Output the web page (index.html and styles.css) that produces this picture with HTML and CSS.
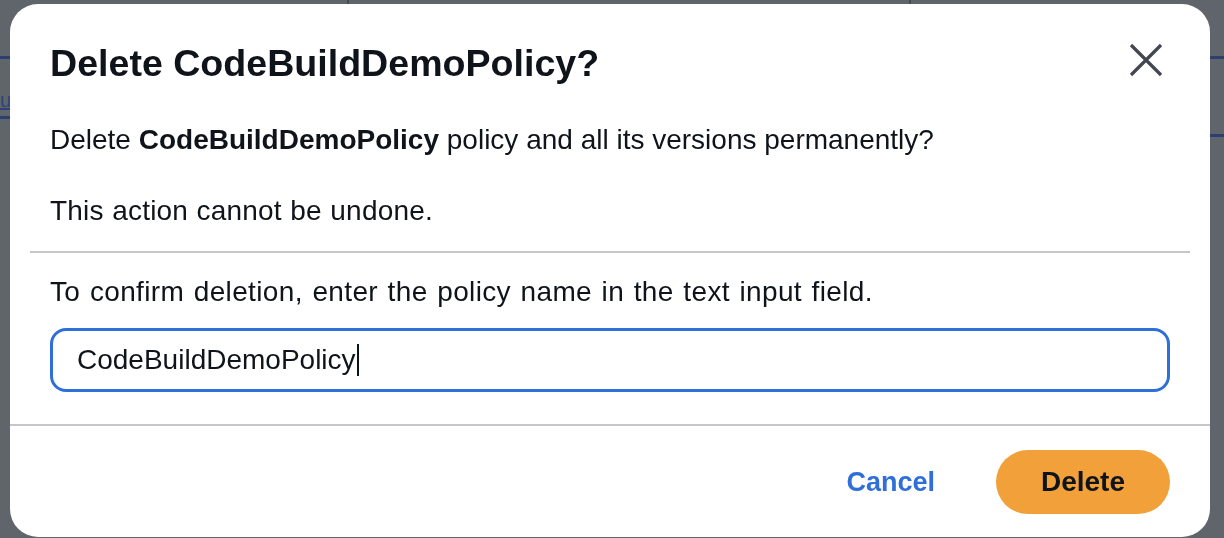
FILE: index.html
```html
<!DOCTYPE html>
<html lang="en">
<head>
<meta charset="utf-8">
<title>Delete policy</title>
<link rel="stylesheet" href="styles.css">
</head>
<body>
<div class="page">
  <div class="page-top">
    <span class="top-col top-col-a"></span>
    <span class="top-col top-col-b"></span>
    <span class="top-col top-col-c"></span>
  </div>
  <div class="page-body">
    <div class="edge edge-left">
      <div class="bg-rule"></div>
      <a class="bg-link">ui</a>
      <div class="bg-rule bg-rule-low"></div>
    </div>
    <div class="edge edge-right">
      <div class="bg-rule"></div>
      <div class="bg-rule bg-rule-far"></div>
    </div>
  </div>
</div>

<div class="overlay">
  <div class="modal" role="dialog" aria-labelledby="modal-title">
    <div class="modal-header">
      <h2 class="modal-title" id="modal-title">Delete CodeBuildDemoPolicy?</h2>
      <button class="close-btn" aria-label="Close modal">
        <svg width="34" height="34" viewBox="0 0 34 34" aria-hidden="true">
          <path d="M2 2 L32 32 M32 2 L2 32" fill="none" stroke="#424650" stroke-width="3.2" stroke-linecap="butt"/>
        </svg>
      </button>
    </div>
    <div class="modal-body">
      <p class="text first">Delete <b>CodeBuildDemoPolicy</b> policy and all its versions permanently?</p>
      <p class="text second">This action cannot be undone.</p>
      <div class="divider"></div>
      <p class="text label">To confirm deletion, enter the policy name in the text input field.</p>
      <div class="input"><span class="input-value">CodeBuildDemoPolicy</span><span class="caret"></span></div>
    </div>
    <div class="modal-footer">
      <a class="cancel" href="#">Cancel</a>
      <button class="delete-btn">Delete</button>
    </div>
  </div>
</div>
</body>
</html>
```

FILE: styles.css
```css
* { box-sizing: border-box; }

html, body {
  margin: 0;
  padding: 0;
}

body {
  width: 1224px;
  height: 538px;
  overflow: hidden;
  background: #60646b;
  font-family: "Liberation Sans", Arial, sans-serif;
  color: #0f141a;
}

/* dimmed page behind the modal */
.page {
  height: 538px;
  display: flex;
  flex-direction: column;
}

.page-top {
  display: flex;
  height: 6px;
}

.top-col {
  height: 6px;
}

.top-col-a { width: 349px; border-right: 2px solid #474b52; }
.top-col-b { width: 562px; border-right: 2px solid #474b52; }
.top-col-c { flex: 1; }

.page-body {
  flex: 1;
  display: flex;
  justify-content: space-between;
}

.edge {
  width: 60px;
  padding-top: 50px;
}

.bg-rule {
  height: 3px;
  background: #2c3f70;
}

.bg-link {
  display: block;
  margin-top: 29px;
  font-size: 20px;
  line-height: 24px;
  color: #2d4478;
  text-decoration: underline;
  text-decoration-thickness: 2px;
}

.bg-rule-low { margin-top: 4px; }
.bg-rule-far { margin-top: 75px; }

/* modal */
.overlay {
  position: fixed;
  inset: 0;
  padding: 4px 14px 1px 10px;
  display: flex;
}

.modal {
  flex: 1;
  background: #ffffff;
  border-radius: 28px;
  display: flex;
  flex-direction: column;
  overflow: hidden;
}

.modal-header {
  display: flex;
  justify-content: space-between;
  align-items: flex-start;
  padding: 39px 40px 0 40px;
}

.modal-title {
  margin: 0;
  font-size: 37.6px;
  line-height: 40px;
  font-weight: 700;
  color: #0f141a;
}

.close-btn {
  width: 48px;
  height: 48px;
  margin-top: -7px;
  padding: 0;
  border: 0;
  background: transparent;
  display: flex;
  align-items: center;
  justify-content: center;
}

.modal-body {
  padding: 0 40px 32px 40px;
}

.text {
  margin: 0;
  font-size: 28px;
  line-height: 40px;
  color: #0f141a;
}

.text b { font-weight: 700; }

.first { margin-top: 36px; }
.second { margin-top: 31px; letter-spacing: 0.2px; word-spacing: 0.5px; }

.divider {
  height: 2px;
  background: #c6c6cd;
  margin: 20px -20px 0 -20px;
}

.label { margin-top: 19px; letter-spacing: 0.35px; word-spacing: 1.5px; }

.input {
  margin-top: 16px;
  height: 64px;
  border: 3px solid #2e6fd8;
  border-radius: 16px;
  padding-left: 24px;
  display: flex;
  align-items: center;
  font-size: 28px;
  color: #0f141a;
}

.caret {
  width: 2px;
  height: 32px;
  background: #0f141a;
  margin-left: 1px;
}

.modal-footer {
  border-top: 2px solid #c6c6cd;
  padding: 24px 40px 23px 40px;
  display: flex;
  justify-content: flex-end;
  align-items: center;
}

.cancel {
  font-size: 27px;
  font-weight: 700;
  color: #2e6fd8;
  text-decoration: none;
  margin-right: 61px;
}

.delete-btn {
  width: 174px;
  height: 64px;
  border: 0;
  border-radius: 32px;
  background: #f2a03a;
  font-family: inherit;
  font-size: 28px;
  font-weight: 700;
  color: #0f141a;
  padding: 0;
}
```
